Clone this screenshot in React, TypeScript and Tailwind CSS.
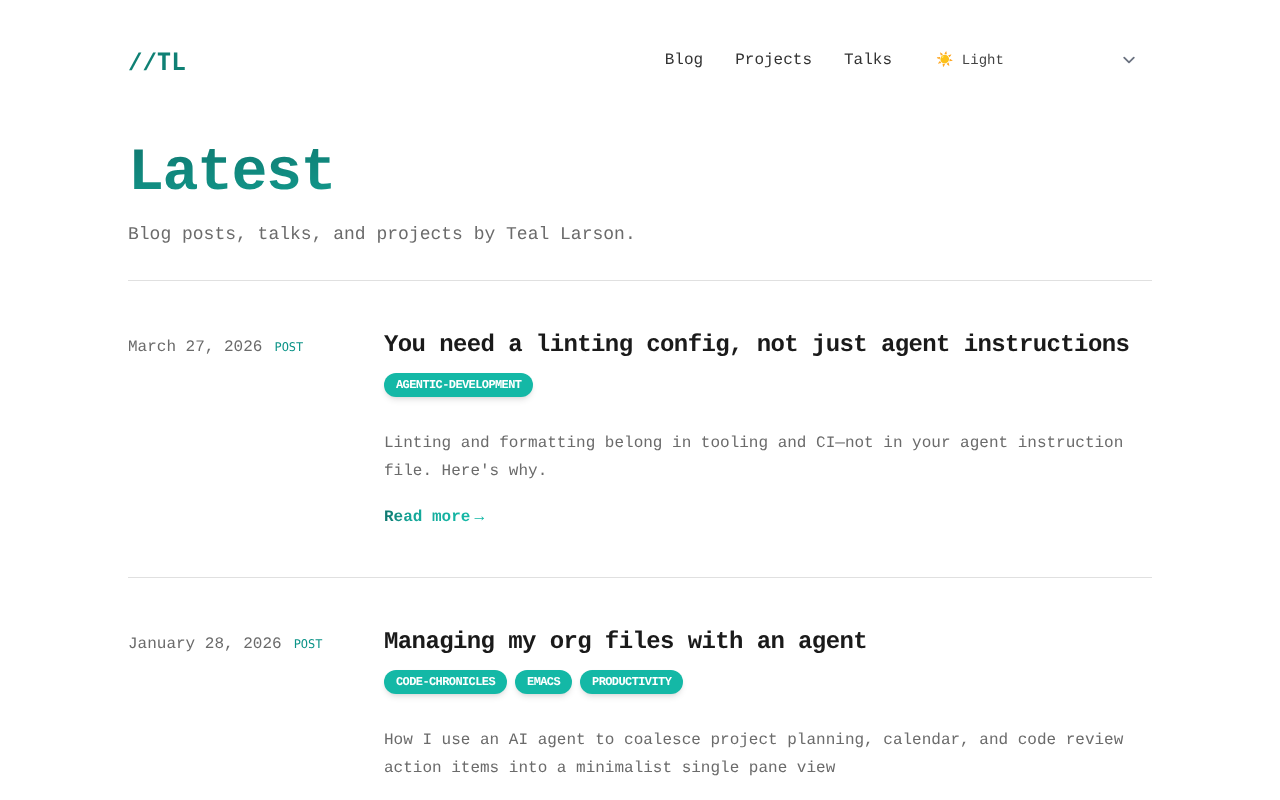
const mono = "font-['Liberation_Mono',monospace] [text-rendering:geometricPrecision]";
const display = "font-['DejaVu_Sans_Mono',monospace]";

interface Post {
  date: string;
  title: string;
  tags: string[];
  lines: string[];
}

const posts: Post[] = [
  {
    date: "March 27, 2026",
    title: "You need a linting config, not just agent instructions",
    tags: ["AGENTIC-DEVELOPMENT"],
    lines: [
      "Linting and formatting belong in tooling and CI—not in your agent instruction file. Here's why.",
    ],
  },
  {
    date: "January 28, 2026",
    title: "Managing my org files with an agent",
    tags: ["CODE-CHRONICLES", "EMACS", "PRODUCTIVITY"],
    lines: [
      "How I use an AI agent to coalesce project planning, calendar, and code review action items into a minimalist single pane view",
    ],
  },
];

const PostRow = ({ post }: { post: Post }) => {
  return (
    <article className="flex border-t border-[#e0e0e0] pt-12 pb-12">
      <div className="w-[256px] shrink-0 flex items-baseline gap-3 h-[30px] pt-[6px]">
        <span className="text-base text-[#6b6b6b] leading-6">{post.date}</span>
        <span className={`${display} text-[12px] tracking-[-0.02px] text-[#0d9488] leading-4`}>POST</span>
      </div>

      <div className="flex-1">
        <h2 className="text-2xl tracking-tight h-[30px] leading-[34px] font-bold text-[#1a1a1a]">{post.title}</h2>
        <div className="flex gap-2 mt-[14px]">
          {post.tags.map((tag) => (
            <span
              key={tag}
              className="h-6 px-3 rounded-full bg-[#14b8a6] text-white text-xs tracking-[-0.6px] font-bold leading-[25px] shadow-md shadow-black/10"
            >
              {tag}
            </span>
          ))}
        </div>
        <p className="mt-8 text-base leading-7 text-[#6b6b6b]">{post.lines[0]}</p>
        <div className="mt-5 flex items-center h-6">
          <a
            href="#"
            className="font-bold text-base leading-6 bg-gradient-to-r from-[#0f766e] via-[#14a698] via-30% to-[#14b8a6] bg-clip-text text-transparent"
          >
            Read more
          </a>
          <span className="ml-1 text-base text-[#14b8a6] leading-6">→</span>
        </div>
      </div>
    </article>
  );
};

const App = () => {
  return (
    <div className={`${mono} [will-change:transform] bg-white min-h-screen px-[128px]`}>
      <header className="flex items-start justify-between h-[120px] pt-[45px]">
        <a href="#" className="text-2xl leading-[34px] font-bold text-[#0f8074]">
          //<span className={`${display} tracking-[-0.05px]`}>TL</span>
        </a>
        <nav className="flex items-center gap-8 h-8 -mt-px text-base text-[#333333]">
          <a href="#">Blog</a>
          <a href="#">Projects</a>
          <a href="#">Talks</a>
          <div className="relative w-[228px] h-8">
            <select
              defaultValue="light"
              className={`${mono} appearance-none w-full h-8 pl-3 pt-0.5 text-sm text-[#444444] bg-transparent outline-none`}
            >
              <option value="light">☀️ Light</option>
              <option value="dark">🌙 Dark</option>
            </select>
            <svg
              viewBox="0 0 20 20"
              fill="none"
              className="absolute right-[11px] top-[4px] w-6 h-6 pointer-events-none"
            >
              <path
                d="M6 8l4 4 4-4"
                stroke="#6b7280"
                strokeWidth="1.5"
                strokeLinecap="round"
                strokeLinejoin="round"
              />
            </svg>
          </div>
        </nav>
      </header>

      <section className="h-[160px] pt-[17px]">
        <h1 className="text-6xl tracking-tight h-[70px] leading-[74px] font-bold bg-gradient-to-br from-[#0f766e] to-[#14b8a6] bg-clip-text text-transparent">
          Latest
        </h1>
        <p className="text-lg leading-7 mt-[14px] text-[#6b6b6b]">
          Blog posts, talks, and projects by Teal Larson.
        </p>
      </section>

      {posts.map((post) => (
        <PostRow key={post.title} post={post} />
      ))}
    </div>
  );
};

export default App;
